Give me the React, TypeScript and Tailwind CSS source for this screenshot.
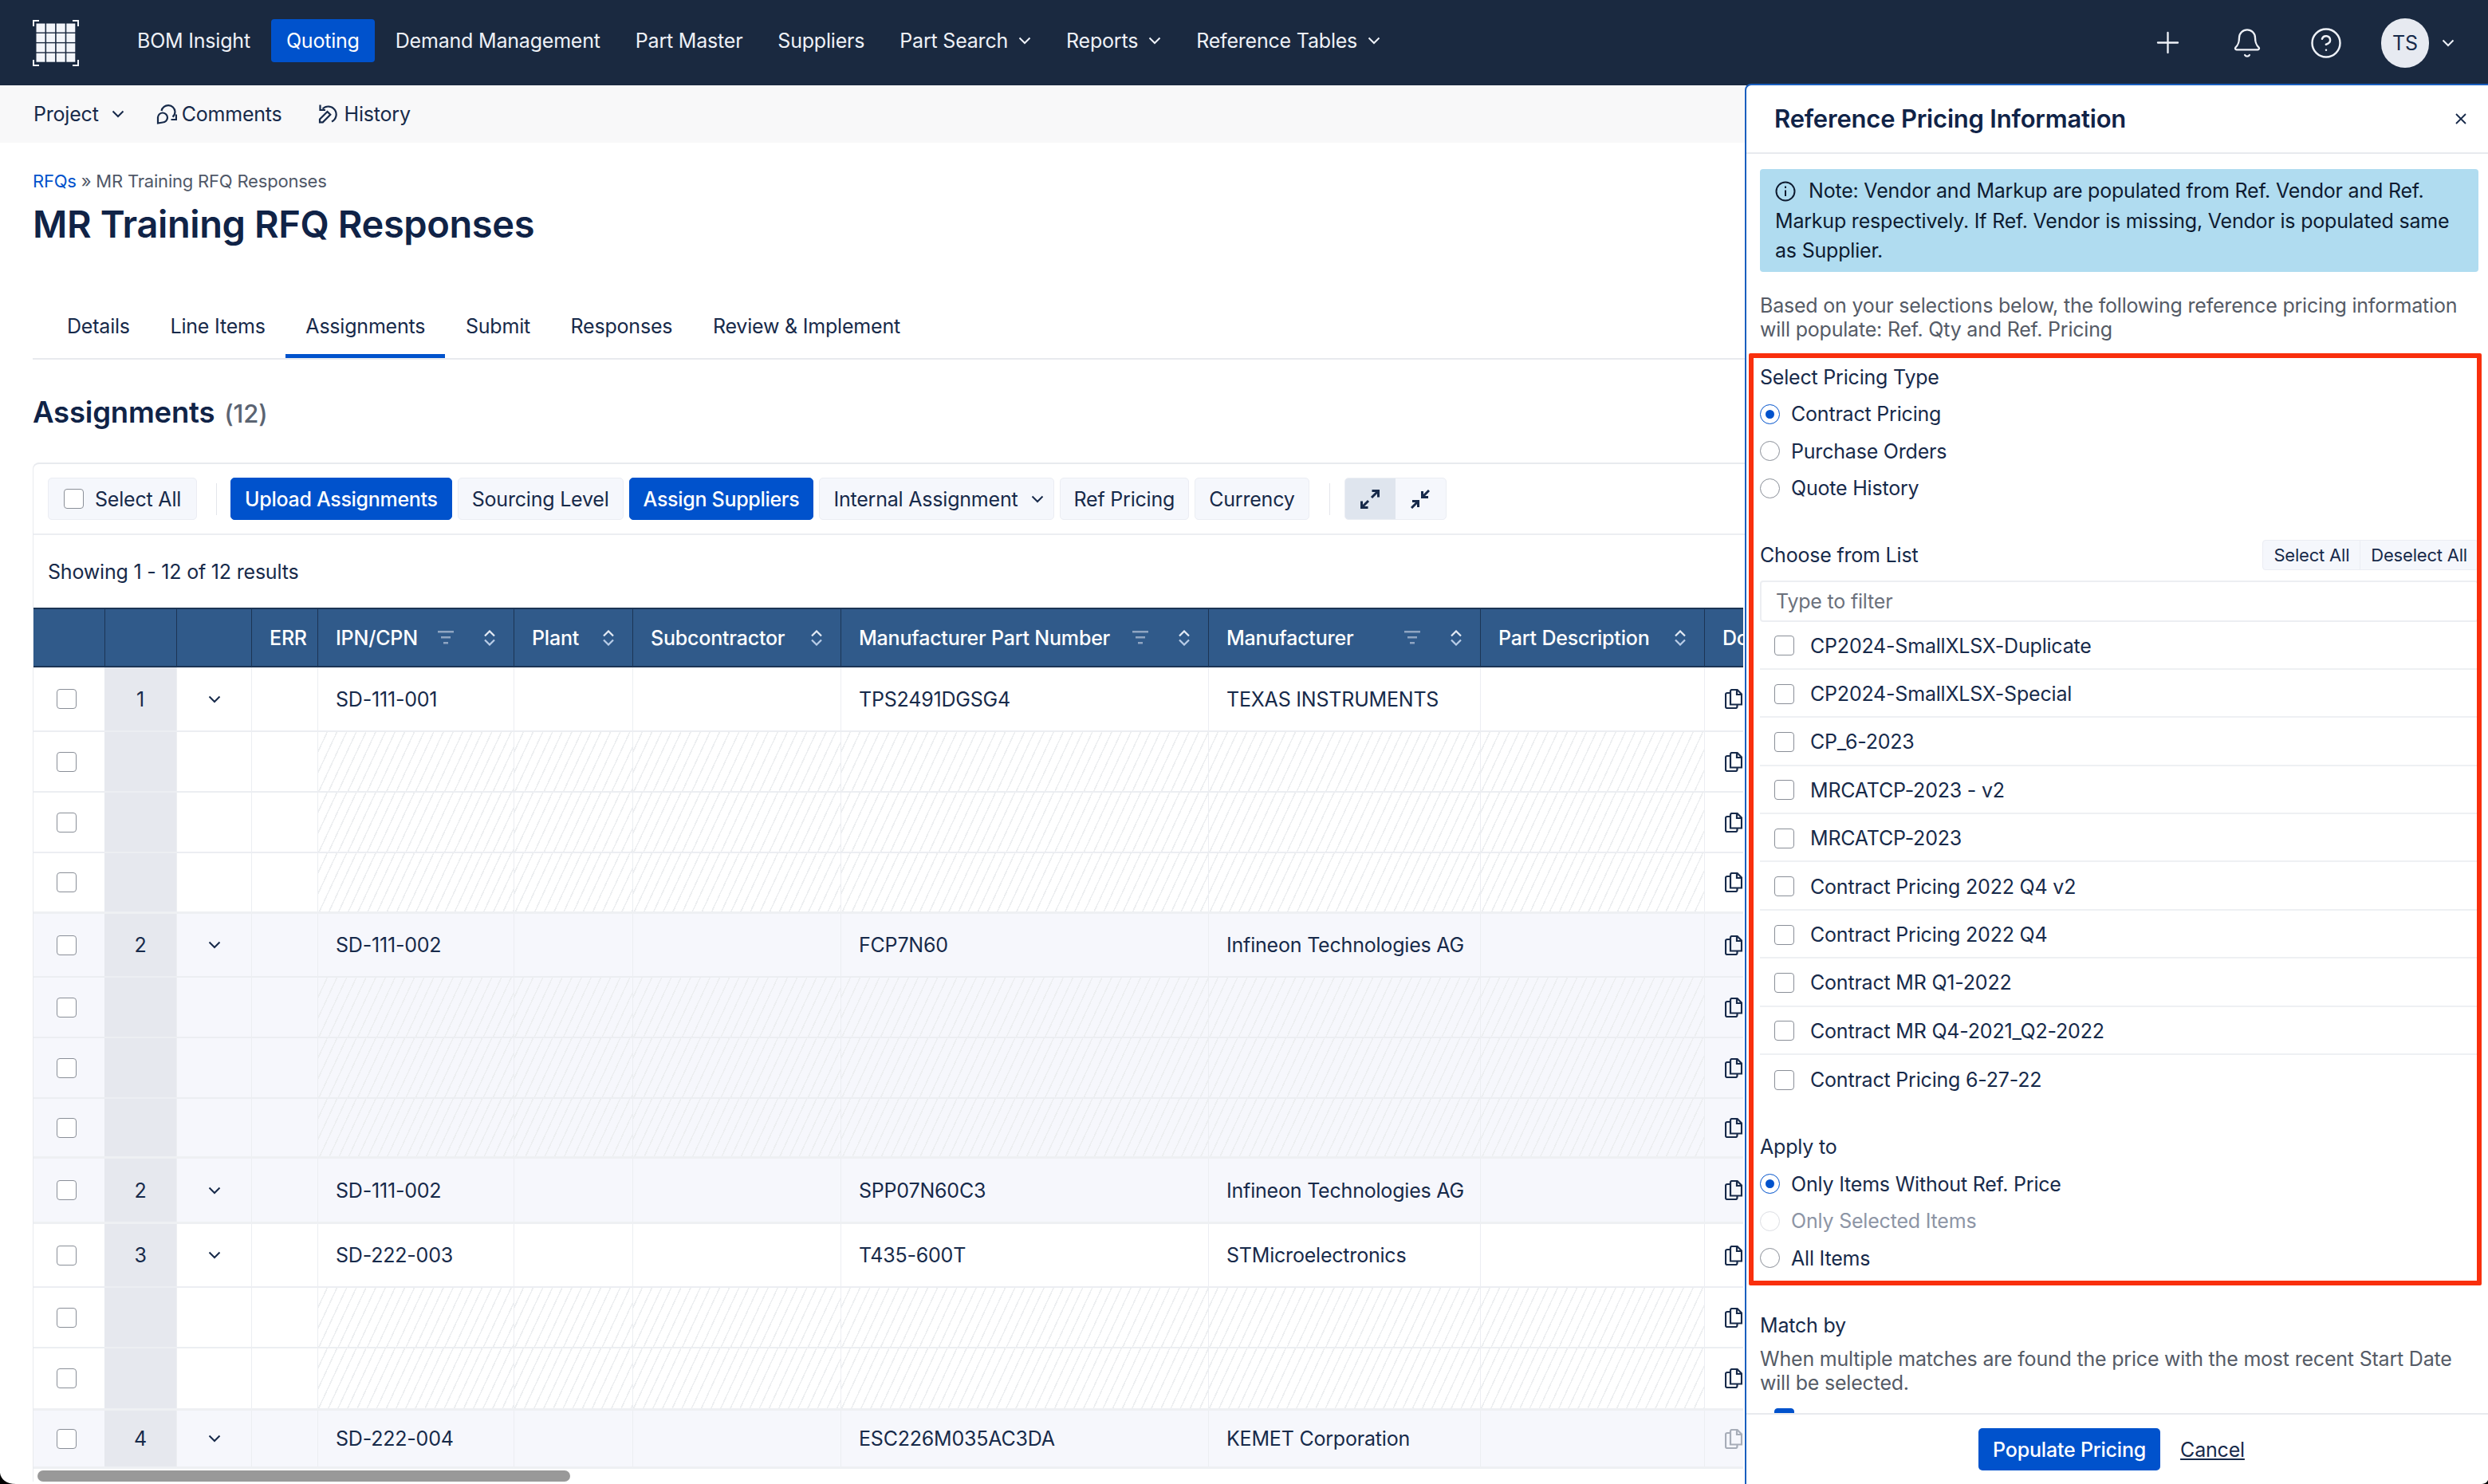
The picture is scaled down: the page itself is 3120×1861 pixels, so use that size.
import { Bell, CircleHelp, Plus } from "lucide-react";

const navItems = ["BOM Insight", "Quoting", "Demand Management", "Part Master", "Suppliers", "Part Search", "Reports", "Reference Tables"];
const navMenus = ["Part Search", "Reports", "Reference Tables"];
const tabs = ["Details", "Line Items", "Assignments", "Submit", "Responses", "Review & Implement"];

const columns = [
  { w: "w-[89px]" },
  { w: "w-[90px]" },
  { w: "w-[94px]" },
  { w: "w-[83px]", label: "ERR" },
  { w: "w-[246px]", label: "IPN/CPN", filter: true, sort: true },
  { w: "w-[149px]", label: "Plant", sort: true },
  { w: "w-[261px]", label: "Subcontractor", sort: true },
  { w: "w-[461px]", label: "Manufacturer Part Number", filter: true, sort: true },
  { w: "w-[341px]", label: "Manufacturer", filter: true, sort: true },
  { w: "w-[281px]", label: "Part Description", sort: true },
  { w: "w-[49px]", label: "Document" },
];

interface RowData {
  num?: string;
  ipn?: string;
  mpn?: string;
  mfr?: string;
  h: string;
  faded?: boolean;
}

interface GroupData {
  tinted?: boolean;
  rows: RowData[];
}

const groups: GroupData[] = [
  { rows: [{ num: "1", ipn: "SD-111-001", mpn: "TPS2491DGSG4", mfr: "TEXAS INSTRUMENTS", h: "h-[79px]" }, { h: "h-[76px]" }, { h: "h-[76px]" }, { h: "h-[75px]" }] },
  { tinted: true, rows: [{ num: "2", ipn: "SD-111-002", mpn: "FCP7N60", mfr: "Infineon Technologies AG", h: "h-[78px]" }, { h: "h-[76px]" }, { h: "h-[76px]" }, { h: "h-[74px]" }] },
  { tinted: true, rows: [{ num: "2", ipn: "SD-111-002", mpn: "SPP07N60C3", mfr: "Infineon Technologies AG", h: "h-[79px]" }] },
  { rows: [{ num: "3", ipn: "SD-222-003", mpn: "T435-600T", mfr: "STMicroelectronics", h: "h-[78px]" }, { h: "h-[76px]" }, { h: "h-[77px]" }] },
  { tinted: true, rows: [{ num: "4", ipn: "SD-222-004", mpn: "ESC226M035AC3DA", mfr: "KEMET Corporation", h: "h-[70px]", faded: true }] },
];

const listItems = [
  "CP2024-SmallXLSX-Duplicate",
  "CP2024-SmallXLSX-Special",
  "CP_6-2023",
  "MRCATCP-2023 - v2",
  "MRCATCP-2023",
  "Contract Pricing 2022 Q4 v2",
  "Contract Pricing 2022 Q4",
  "Contract MR Q1-2022",
  "Contract MR Q4-2021_Q2-2022",
  "Contract Pricing 6-27-22",
];

const Chevron = ({ className = "" }: { className?: string }) => (
  <svg viewBox="0 0 16 10" fill="none" stroke="currentColor" strokeWidth="2" className={`w-[16px] h-[10px] shrink-0 ${className}`}>
    <path d="M1.5 1.5 8 8l6.5-6.5" />
  </svg>
);

const Logo = () => (
  <svg viewBox="0 0 58 58" className="w-[58px] h-[58px] shrink-0">
    {[0, 1, 2, 3].map((r) =>
      [0, 1, 2, 3].map((c) => <rect key={`${r}-${c}`} x={4.5 + c * 12.6} y={4.5 + r * 12.4} width="11" height="11" fill="#f3f5fa" />)
    )}
    <path d="M1 8V1h7M50 1h7v7M1 50v7h7M57 50v7h-7" fill="none" stroke="#f3f5fa" strokeWidth="2" />
  </svg>
);

const CommentsIcon = () => (
  <svg viewBox="0 0 26 26" fill="none" stroke="currentColor" strokeWidth="2.2" className="w-[26px] h-[26px]">
    <path d="M6.5 9A8.6 8.6 0 0 1 23.5 10c0 3-1 5-3 6.6" />
    <path d="M25 13.5V20h-6.5" />
    <path d="M2 24.5V17a6 6 0 1 1 6 6.5Z" />
  </svg>
);

const HistoryIcon = () => (
  <svg viewBox="0 0 26 26" fill="none" stroke="currentColor" strokeWidth="2.2" className="w-[26px] h-[26px]">
    <path d="M6.5 6.5A10 10 0 1 1 18 22.5" />
    <path d="M3.5 1.5V8H10" />
    <path d="M3 19.5 12.5 10l3.8 3.8-9.5 9.5H3Z" />
  </svg>
);

const CopyIcon = ({ faded }: { faded?: boolean }) => (
  <svg viewBox="0 0 22 25" fill="none" stroke={faded ? "#a7adb8" : "#172a4a"} strokeWidth="2.2" className="w-[22px] h-[25px]">
    <path d="M7 19.5V3a2 2 0 0 1 2-2h6.5L21 6.5V19.5Z" />
    <path d="M15 1v6h6" />
    <path d="M7 5H3a2 2 0 0 0-2 2v15a2 2 0 0 0 2 2h10.500a2 2 0 0 0 2-2v-2.500" />
  </svg>
);

const ExpandIcon = () => (
  <svg viewBox="0 0 24 24" fill="none" stroke="currentColor" strokeWidth="3" className="w-[24px] h-[24px]">
    <path d="M14 10 22.500 1.500M14.500 1.500h8v8M10 14 1.500 22.500M1.500 14.500v8h8" />
  </svg>
);

const CollapseIcon = () => (
  <svg viewBox="0 0 24 24" fill="none" stroke="currentColor" strokeWidth="3" className="w-[24px] h-[24px]">
    <path d="M23 1 14.500 9.500M14.500 2v7.500H22M1 23l8.500-8.500M2 14.500h7.500V22" />
  </svg>
);

const FilterIcon = () => (
  <svg viewBox="0 0 20 17" fill="#8fa5c2" className="w-[20px] h-[17px] shrink-0">
    <rect x="0" y="0" width="20" height="2.500" />
    <rect x="4" y="7" width="12" height="2.500" />
    <rect x="7" y="14" width="6" height="2.500" />
  </svg>
);

const SortIcon = () => (
  <svg viewBox="0 0 16 20" fill="none" strokeWidth="2.200" className="w-[16px] h-[20px] shrink-0">
    <path d="M2 7.500 8 1.500l6 6" stroke="#e4ebf5" />
    <path d="M2 12.500l6 6 6-6" stroke="#b9cde8" />
  </svg>
);

const Checkbox = ({ checked }: { checked?: boolean }) => (
  <span className={`block w-[25px] h-[25px] shrink-0 rounded-[4px] border-[1.5px] ${checked ? "border-[#0052cc] bg-[#0052cc]" : "border-[#8a8f98] bg-white"}`} />
);

const Radio = ({ label, checked, disabled }: { label: string; checked?: boolean; disabled?: boolean }) => (
  <div className="flex items-center h-[46.5px]">
    <span className={`flex items-center justify-center w-[25px] h-[25px] rounded-full border-[1.5px] bg-white ${checked ? "border-[#0052cc]" : disabled ? "border-[#dcdee3]" : "border-[#8a8f98]"}`}>
      {checked && <span className="w-[11px] h-[11px] rounded-full bg-[#0052cc]" />}
    </span>
    <span className={`ml-[14px] ${disabled ? "text-[#8d95a5]" : ""}`}>{label}</span>
  </div>
);

const ToolButton = ({ label, primary, menu }: { label: string; primary?: boolean; menu?: boolean }) => (
  <button className={`flex items-center h-[53px] pl-[17px] ${menu ? "pr-[12px]" : "pr-[17px]"} rounded-[5px] border ${primary ? "bg-[#0052cc] border-[#0052cc] text-white font-medium tracking-[-0.3px]" : "bg-[#f5f7fc] border-[#ebedf3]"}`}>
    {label}
    {menu && <Chevron className="ml-[16px]" />}
  </button>
);

const HeaderRow = () => (
  <div className="flex h-[75px] bg-[#305a8a] border-y-2 border-[#1c3555] text-white font-medium">
    {columns.map((col, i) => (
      <div key={i} className={`${col.w} shrink-0 flex items-center pl-[22px] pr-[22px] whitespace-nowrap ${i > 0 ? "border-l border-[#1c3555]" : ""}`}>
        {col.label && <span>{col.label}</span>}
        {col.filter && <span className="ml-auto mr-[37px]"><FilterIcon /></span>}
        {col.sort && <span className={col.filter ? "" : "ml-auto"}><SortIcon /></span>}
      </div>
    ))}
  </div>
);

const cellBorder = "border-l border-[#eceef2]";
const stripes = "bg-[repeating-linear-gradient(115deg,transparent,transparent_9.5px,#eceef0_9.5px,#eceef0_11px)]";

const Row = ({ row, first }: { row: RowData; first: boolean }) => (
  <div className={`flex ${row.h} ${first ? "" : "border-t-2 border-[#eceef2]"}`}>
    <div className="w-[89px] shrink-0 flex items-center pl-[29px]">
      <Checkbox />
    </div>
    <div className="w-[90px] shrink-0 flex items-center justify-center bg-[#e6e8ee]">{row.num}</div>
    <div className={`w-[94px] shrink-0 flex items-center justify-center ${cellBorder}`}>
      {first && <Chevron className="w-[13px] h-[8px]" />}
    </div>
    <div className={`w-[83px] shrink-0 ${cellBorder}`} />
    {[row.ipn, "", "", row.mpn, row.mfr, ""].map((text, i) => (
      <div key={i} className={`${columns[i + 4].w} shrink-0 flex items-center pl-[22px] whitespace-nowrap ${cellBorder} ${first ? "" : stripes}`}>
        {text}
      </div>
    ))}
    <div className={`w-[49px] shrink-0 flex items-center pl-[25px] overflow-hidden ${cellBorder}`}>
      <CopyIcon faded={row.faded} />
    </div>
  </div>
);

export default function App() {
  return (
    <div className="relative w-[3120px] h-[1861px] overflow-hidden bg-white font-[Inter,sans-serif] text-[25px] tracking-[-0.2px] leading-[30px] text-[#172a4a]">
      <header className="flex items-center h-[107px] pl-[41px] pr-[42px] bg-[#1a2940] text-[#eef1f7]">
        <Logo />
        <nav className="flex items-center gap-2 ml-[55px] mb-[5px]">
          {navItems.map((item) => (
            <a key={item} className={`flex items-center h-[54px] rounded-[4px] ${item === "Quoting" ? "px-[19px] bg-[#0052cc] text-white" : "px-[18px]"}`}>
              {item}
              {navMenus.includes(item) && <Chevron className="ml-[13px]" />}
            </a>
          ))}
        </nav>
        <div className="flex items-center ml-auto">
          <span className="flex justify-center w-[99px]"><Plus size={43} strokeWidth={1.3} /></span>
          <span className="flex justify-center w-[99px]"><Bell size={40} strokeWidth={1.4} /></span>
          <span className="flex justify-center w-[99px]"><CircleHelp size={42} strokeWidth={1.4} /></span>
          <span className="flex items-center justify-center ml-[20px] w-[60px] h-[62px] rounded-full bg-[#e7eaf1] text-[#172a4a]">TS</span>
          <Chevron className="ml-[16px]" />
        </div>
      </header>

      <div className="flex items-center h-[72px] pl-[42px] bg-[#f8f8f9]">
        <span>Project</span>
        <Chevron className="ml-[16px]" />
        <span className="flex items-center ml-[40px] gap-[6px]"><CommentsIcon />Comments</span>
        <span className="flex items-center ml-[44px] gap-[8px]"><HistoryIcon />History</span>
      </div>

      <main className="pl-[41px]">
        <div className="pt-[32px] text-[22px] leading-[32px] text-[#505868]">
          <a className="text-[#0052cc]">RFQs</a> » MR Training RFQ Responses
        </div>
        <h1 className="mt-[8px] text-[47px] tracking-[-0.4px] leading-[60px] font-semibold text-[#102347]">MR Training RFQ Responses</h1>

        <div className="flex gap-[0.6px] mt-[59px] pl-[18px] border-b-2 border-[#e8eaee]">
          {tabs.map((tab) => (
            <a key={tab} className={`flex items-center h-[79px] pt-[3px] px-[25px] border-b-[5px] ${tab === "Assignments" ? "border-[#0052cc]" : "border-transparent"}`}>
              {tab}
            </a>
          ))}
        </div>

        <div className="flex items-baseline h-[50px] mt-[41px] text-[36.500px] leading-[50px] font-semibold text-[#102347]">
          Assignments <span className="ml-[12px] text-[31px] font-medium text-[#5b6472]">(12)</span>
        </div>

        <section className="mt-[38px] border-t-2 border-l border-[#e8eaee] rounded-tl-[8px]">
          <div className="flex items-center pt-[17px] pb-[17px] pl-[18px] border-b-2 border-[#eceef2]">
            <label className="flex items-center h-[53px] px-[19px] rounded-[5px] border border-[#ebedf3] bg-[#f5f7fc]">
              <Checkbox />
              <span className="ml-[14px]">Select All</span>
            </label>
            <span className="w-[1px] h-[40px] bg-[#e4e6eb] ml-[24px] mr-[17px]" />
            <div className="flex gap-[7px]">
              <ToolButton label="Upload Assignments" primary />
              <ToolButton label="Sourcing Level" />
              <ToolButton label="Assign Suppliers" primary />
              <ToolButton label="Internal Assignment" menu />
              <ToolButton label="Ref Pricing" />
              <ToolButton label="Currency" />
            </div>
            <span className="w-[1px] h-[40px] bg-[#e4e6eb] ml-[25px] mr-[18px]" />
            <div className="flex h-[53px] rounded-[5px] overflow-hidden border border-[#ebedf3] bg-[#f5f7fc]">
              <span className="flex items-center justify-center w-[63px] bg-[#dfe5ee]"><ExpandIcon /></span>
              <span className="flex items-center justify-center w-[63px]"><CollapseIcon /></span>
            </div>
          </div>

          <div className="flex items-center h-[91px] pl-[18px]">Showing 1 - 12 of 12 results</div>

          <div className="w-[2144px] overflow-hidden">
            <div className="w-[2144px]">
              <HeaderRow />
              {groups.map((group, g) => (
                <div key={g} className={`border-b-[3px] border-[#eef0f3] ${group.tinted ? "bg-[#f6f7fc]" : "bg-white"}`}>
                  {group.rows.map((row, r) => (
                    <Row key={r} row={row} first={r === 0} />
                  ))}
                </div>
              ))}
            </div>
          </div>
          <div className="mt-[2px] ml-[5px] w-[668px] h-[14px] rounded-full bg-[#999999]" />
        </section>
      </main>

      {/* drawer over the table */}
      <aside className="absolute left-[2188px] top-[105px] right-0 bottom-0 flex flex-col bg-white border-l-2 border-t-2 border-[#1a5fbf] rounded-tl-[8px]">
        <div className="flex items-center justify-between h-[86px] shrink-0 pl-[35px] pr-[26px] border-b-2 border-[#e8eaee]">
          <h2 className="text-[31px] leading-[40px] font-semibold text-[#102347]">Reference Pricing Information</h2>
          <svg viewBox="0 0 16 16" fill="none" stroke="currentColor" strokeWidth="1.800" className="w-[16px] h-[16px]">
            <path d="M2 2l12 12M14 2 2 14" />
          </svg>
        </div>

        <div className="flex-1 overflow-hidden pl-[17px] pr-[12px]">
          <div className="mt-[19px] h-[129px] py-[9px] px-[19px] rounded-[4px] bg-[#b0dcf0] leading-[37.5px] text-[#0e1b30]">
            <svg viewBox="0 0 26 26" fill="none" stroke="currentColor" strokeWidth="2" className="inline-block align-[-5px] w-[26px] h-[26px] mr-[16px]">
              <circle cx="13" cy="13" r="11.500" />
              <path d="M13 11.500V19M13 6.500v2.500" />
            </svg>
            Note: Vendor and Markup are populated from Ref. Vendor and Ref. Markup respectively. If Ref. Vendor is missing, Vendor is populated same as Supplier.
          </div>
          <p className="mt-[27px] text-[#555b66]">Based on your selections below, the following reference pricing information will populate: Ref. Qty and Ref. Pricing</p>

          <div className="mt-[30px]">Select Pricing Type</div>
          <div className="mt-[8px]">
            <Radio label="Contract Pricing" checked />
            <Radio label="Purchase Orders" />
            <Radio label="Quote History" />
          </div>

          <div className="flex items-center justify-between mt-[41px] h-[38px]">
            <span>Choose from List</span>
            <div className="flex h-[38px] text-[22px] rounded-[4px] border border-[#ebedf3] bg-[#f5f7fc]">
              <span className="flex items-center px-[13px] border-r border-[#ebedf3]">Select All</span>
              <span className="flex items-center px-[13px]">Deselect All</span>
            </div>
          </div>
          <input
            placeholder="Type to filter"
            className="block mt-[13px] w-full h-[52px] pl-[18px] rounded-[4px] border-2 border-[#eceef2] outline-none placeholder:text-[#6b717c]"
          />
          {listItems.map((item, i) => (
            <div key={item} className={`flex items-center h-[60.4px] pt-[2px] pl-[18px] ${i < listItems.length - 1 ? "border-b-2 border-[#eef0f3]" : ""}`}>
              <Checkbox />
              <span className="ml-[20px]">{item}</span>
            </div>
          ))}

          <div className="mt-[40px]">Apply to</div>
          <div className="mt-[8px]">
            <Radio label="Only Items Without Ref. Price" checked />
            <Radio label="Only Selected Items" disabled />
            <Radio label="All Items" />
          </div>

          <div className="mt-[46px]">Match by</div>
          <p className="mt-[12px] text-[#555b66]">When multiple matches are found the price with the most recent Start Date will be selected.</p>
          <div className="mt-[17px] pl-[18px]"><Checkbox checked /></div>
        </div>

        <div className="flex items-center justify-center gap-[25px] h-[89px] shrink-0 pr-[14px] border-t-2 border-[#e8eaee]">
          <button className="h-[53px] px-[18px] rounded-[5px] bg-[#0052cc] text-white font-medium">Populate Pricing</button>
          <a className="underline">Cancel</a>
        </div>
      </aside>

      {/* red annotation box from the screenshot */}
      <div className="absolute left-[2193px] top-[443px] w-[919px] h-[1169px] border-[6px] border-[#f92f0d] rounded-[2px]" />

      {/* window corners */}
      <svg viewBox="0 0 20 14" className="absolute left-0 bottom-0 w-[20px] h-[14px]"><path d="M0 0C1 8 8 14 20 14H0Z" fill="#000" /></svg>
      <svg viewBox="0 0 10 5" className="absolute right-0 bottom-0 w-[10px] h-[5px]"><path d="M10 0C9 3 6 5 0 5H10Z" fill="#000" /></svg>
    </div>
  );
}
